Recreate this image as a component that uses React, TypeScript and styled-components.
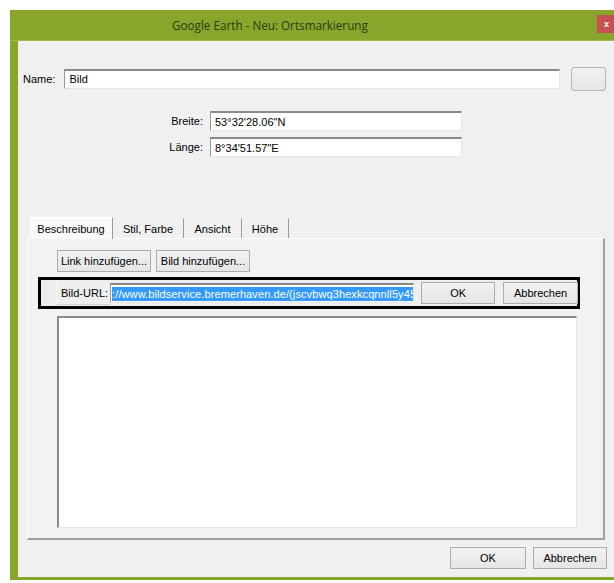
import React from "react";
import styled, { createGlobalStyle } from "styled-components";

const GlobalStyle = createGlobalStyle`
  html, body {
    margin: 0;
    background: #ffffff;
    overflow: hidden;
  }
  body {
    font-family: "Liberation Sans", Arial, sans-serif;
    font-size: 11px;
    color: #000;
  }
`;

const Window = styled.div`
  margin: 10px 0 0 10px;
  width: 620px;
  height: 570px;
  background: #88a62b;
  display: flex;
  flex-direction: column;
  padding: 0 0 3px 8px;
  box-sizing: border-box;
`;

const TitleBar = styled.div`
  height: 30px;
  display: flex;
  align-items: center;
  margin-left: -8px;
  padding-left: 162px;
  position: relative;
  border-bottom: 1px solid #9fb94a;
`;

const Title = styled.div`
  font-family: "Open Sans", "Liberation Sans", sans-serif;
  font-size: 11.7px;
  color: #2f3a14;
`;

const CloseButton = styled.div`
  position: absolute;
  left: 587px;
  top: 5px;
  width: 30px;
  height: 18px;
  background: #c75050;
  color: #fff;
  font-size: 9px;
  font-weight: bold;
  display: flex;
  align-items: center;
  padding-left: 7px;
  box-sizing: border-box;
`;

const Body = styled.div`
  flex: 1;
  background: #f0f0f0;
  display: flex;
  flex-direction: column;
  padding: 26px 0 0 5px;
  position: relative;
`;

const NameRow = styled.div`
  display: flex;
  align-items: center;
  height: 23px;
`;

const Label = styled.span<{ $width?: number }>`
  display: inline-block;
  width: ${(p) => (p.$width ? `${p.$width}px` : "auto")};
  text-align: right;
  white-space: nowrap;
  flex-shrink: 0;
`;

const TextInput = styled.div<{ $width: number; $selected?: boolean }>`
  width: ${(p) => p.$width}px;
  height: 20px;
  flex-shrink: 0;
  box-sizing: border-box;
  background: #fff;
  border-top: 2px solid #8a8a8a;
  border-left: 1px solid #9a9a9a;
  border-right: 1px solid #e6e6e6;
  border-bottom: 1px solid #e6e6e6;
  display: flex;
  align-items: center;
  padding-left: ${(p) => (p.$selected ? 1 : 4)}px;
  overflow: hidden;
  white-space: nowrap;
`;

const Selection = styled.span`
  background: #3399ff;
  color: #fff;
  padding: 1px 0;
  font-size: 11px;
  letter-spacing: 0.1px;
`;

const PushButton = styled.div<{ $width: number }>`
  width: ${(p) => p.$width}px;
  height: 22px;
  flex-shrink: 0;
  box-sizing: border-box;
  border: 1px solid #acacac;
  background: linear-gradient(#f2f2f2, #e5e5e5);
  display: flex;
  align-items: center;
  justify-content: center;
  white-space: nowrap;
`;

const IconButton = styled(PushButton)`
  border-radius: 3px;
  height: 24px;
  margin-left: 11px;
  border-color: #b5b5b5;
`;

const CoordBlock = styled.div`
  margin-top: 21px;
  display: flex;
  flex-direction: column;
  gap: 6px;
`;

const CoordRow = styled.div`
  display: flex;
  align-items: center;
  gap: 7px;
`;

const Tabs = styled.div`
  margin-top: 59px;
  margin-left: 7px;
  display: flex;
  align-items: flex-end;
  height: 22px;
`;

const Tab = styled.div<{ $active?: boolean; $width: number }>`
  width: ${(p) => p.$width}px;
  height: ${(p) => (p.$active ? 22 : 20)}px;
  box-sizing: border-box;
  background: ${(p) => (p.$active ? "#f9f9f9" : "#f0f0f0")};
  border-right: 1px solid #9a9a9a;
  border-top: 1px solid ${(p) => (p.$active ? "#ffffff" : "transparent")};
  display: flex;
  align-items: center;
  justify-content: center;
  position: relative;
  z-index: ${(p) => (p.$active ? 1 : 0)};
  margin-bottom: ${(p) => (p.$active ? -1 : 0)}px;
`;

const TabPanel = styled.div`
  margin-left: 4px;
  width: 578px;
  height: 302px;
  box-sizing: border-box;
  background: #f2f2f2;
  border-top: 1px solid #ffffff;
  border-left: 1px solid #ffffff;
  border-right: 2px solid #a0a0a0;
  border-bottom: 2px solid #a0a0a0;
  display: flex;
  flex-direction: column;
  padding: 11px 0 0 29px;
`;

const ButtonRow = styled.div`
  display: flex;
  gap: 5px;
`;

const UrlBar = styled.div`
  margin: 5px 0 0 -19px;
  width: 542px;
  height: 32px;
  box-sizing: border-box;
  border: 3px solid #000;
  display: flex;
  align-items: center;
  padding-left: 15px;
  background: #eeeeee;
`;

const UrlLabel = styled.div`
  height: 22px;
  flex-shrink: 0;
  white-space: nowrap;
  display: flex;
  align-items: center;
  padding: 0 2px 0 4px;
  border-left: 1px solid #f8f8f8;
  border-bottom: 1px solid #d0d0d0;
`;

const UrlButtons = styled.div`
  display: flex;
  gap: 8px;
  margin-left: 7px;
`;

const TextArea = styled.div`
  margin-top: 7px;
  width: 520px;
  height: 212px;
  box-sizing: border-box;
  background: #fff;
  border-top: 2px solid #8a8a8a;
  border-left: 2px solid #8a8a8a;
  border-right: 1px solid #e6e6e6;
  border-bottom: 1px solid #e6e6e6;
`;

const Footer = styled.div`
  margin-top: 7px;
  display: flex;
  gap: 7px;
  padding-left: 427px;
`;

const Grip = styled.svg`
  position: absolute;
  right: 6px;
  bottom: 0;
`;

export default function App() {
  return (
    <>
      <GlobalStyle />
      <Window>
        <TitleBar>
          <Title>Google Earth - Neu: Ortsmarkierung</Title>
          <CloseButton>x</CloseButton>
        </TitleBar>
        <Body>
          <NameRow>
            <Label>Name:</Label>
            <TextInput $width={496} style={{ marginLeft: 9 }}>
              Bild
            </TextInput>
            <IconButton $width={35} />
          </NameRow>

          <CoordBlock>
            <CoordRow>
              <Label $width={180}>Breite:</Label>
              <TextInput $width={252}>53°32'28.06"N</TextInput>
            </CoordRow>
            <CoordRow>
              <Label $width={180}>Länge:</Label>
              <TextInput $width={252}>8°34'51.57"E</TextInput>
            </CoordRow>
          </CoordBlock>

          <Tabs>
            <Tab $active $width={83}>Beschreibung</Tab>
            <Tab $width={71}>Stil, Farbe</Tab>
            <Tab $width={58}>Ansicht</Tab>
            <Tab $width={47}>Höhe</Tab>
          </Tabs>

          <TabPanel>
            <ButtonRow>
              <PushButton $width={94}>Link hinzufügen...</PushButton>
              <PushButton $width={94}>Bild hinzufügen...</PushButton>
            </ButtonRow>

            <UrlBar>
              <UrlLabel>Bild-URL:</UrlLabel>
              <TextInput $width={304} $selected>
                <Selection>
                  ://www.bildservice.bremerhaven.de/(jscvbwq3hexkcqnnll5y45
                </Selection>
              </TextInput>
              <UrlButtons>
                <PushButton $width={74}>OK</PushButton>
                <PushButton $width={75}>Abbrechen</PushButton>
              </UrlButtons>
            </UrlBar>

            <TextArea />
          </TabPanel>

          <Footer>
            <PushButton $width={76}>OK</PushButton>
            <PushButton $width={74}>Abbrechen</PushButton>
          </Footer>

          <Grip width="10" height="10" viewBox="0 0 10 10">
            <path d="M9 3 L3 9 M9 6 L6 9" stroke="#b0b0b0" strokeWidth="1" />
          </Grip>
        </Body>
      </Window>
    </>
  );
}
